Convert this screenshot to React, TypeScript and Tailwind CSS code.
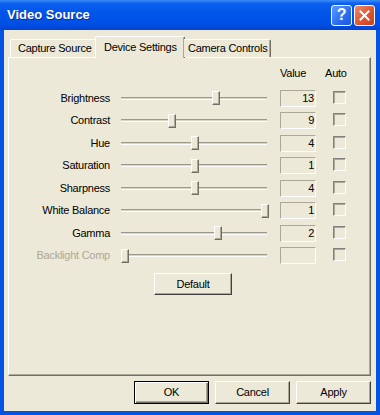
const font = { fontFamily: '"Liberation Sans", Arial, sans-serif' };

type Row = {
  label: string;
  value: string;
  thumb: number;
  h: string;
  disabled?: boolean;
};

const rows: Row[] = [
  { label: "Brightness", value: "13", thumb: 212, h: "h-[22px]" },
  { label: "Contrast", value: "9", thumb: 168, h: "h-[23px]" },
  { label: "Hue", value: "4", thumb: 191, h: "h-[22px]" },
  { label: "Saturation", value: "1", thumb: 191, h: "h-[23px]" },
  { label: "Sharpness", value: "4", thumb: 191, h: "h-[22px]" },
  { label: "White Balance", value: "1", thumb: 261, h: "h-[23px]" },
  { label: "Gamma", value: "2", thumb: 214, h: "h-[22px]" },
  { label: "Backlight Comp", value: "", thumb: 121, h: "h-[23px]", disabled: true },
];

function Slider({ thumb }: { thumb: number }) {
  return (
    <div className="relative ml-[8px] w-[152px] h-[16px] flex items-center px-[3px]">
      <div className="w-full h-[3px] border-t border-t-[#9d9a8c] border-b border-b-white bg-[#d8d4c4]" />
      <div
        className="absolute top-[1px] w-[8px] h-[14px] bg-[#ECE9D8] border-t border-l border-t-white border-l-white border-r border-b border-r-[#716f64] border-b-[#716f64] shadow-[inset_-1px_-1px_0_#aca899]"
        style={{ left: thumb - 118 }}
      />
    </div>
  );
}

function Button({ children, primary, className = "" }: { children: string; primary?: boolean; className?: string }) {
  return (
    <div
      className={`flex items-center justify-center bg-[#ECE9D8] text-[11px] text-black ${
        primary
          ? "border border-black shadow-[inset_1px_1px_0_white,inset_-1px_-1px_0_#716f64,inset_-2px_-2px_0_#aca899]"
          : "border-t border-l border-t-white border-l-white border-r border-b border-r-[#404040] border-b-[#404040] shadow-[inset_-1px_-1px_0_#aca899]"
      } ${className}`}
    >
      {children}
    </div>
  );
}

export default function App() {
  return (
    <div className="w-[380px] h-[415px] flex flex-col bg-[#0553E2] tracking-[-0.25px]" style={font}>
      {/* title bar */}
      <div className="h-[30px] flex items-center pl-[7px] pr-[5px] bg-[linear-gradient(to_bottom,#3d8cf5_0%,#0a5ff0_12%,#0055e8_45%,#0150e6_80%,#0142d0_100%)]">
        <span className="text-white font-bold text-[13px] tracking-normal [text-shadow:1px_1px_0_#0b2d9a] flex-1">
          Video Source
        </span>
        <div className="w-[21px] h-[21px] rounded-[3px] border border-white bg-[linear-gradient(135deg,#5d9bff,#2a6cf0_60%,#1d58e0)] flex items-center justify-center text-white font-bold text-[16px] leading-none">
          ?
        </div>
        <div className="ml-[2px] w-[21px] h-[21px] rounded-[3px] border border-white bg-[linear-gradient(135deg,#f08a6b,#e0552f_55%,#c9401c)] flex items-center justify-center">
          <svg width="11" height="11" viewBox="0 0 11 11">
            <path d="M1.5 1.5 L9.5 9.5 M9.5 1.5 L1.5 9.5" stroke="white" strokeWidth="2" strokeLinecap="square" />
          </svg>
        </div>
      </div>

      {/* body */}
      <div className="flex-1 mx-[4px] mb-[4px] bg-[#ECE9D8] flex flex-col pt-[6px]">
        {/* tabs */}
        <div className="flex items-end h-[21px] pl-[6px] relative z-10 whitespace-nowrap">
          <div className="h-[18px] w-[87px] pl-[7px] flex items-center text-[11px] text-black bg-[#ECE9D8] border-t border-l border-t-white border-l-white rounded-tl-[2px]">
            Capture Source
          </div>
          <div className="h-[22px] mb-[-1px] w-[90px] -ml-[2px] pl-[8px] flex items-center text-[11px] text-black bg-[#ECE9D8] border-t border-l border-r border-t-white border-l-white border-r-[#716f64] shadow-[inset_-1px_0_0_#aca899] rounded-t-[2px]">
            Device Settings
          </div>
          <div className="h-[18px] w-[87px] -ml-[1px] pl-[4px] flex items-center text-[11px] text-black bg-[#ECE9D8] border-t border-r border-t-white border-r-[#716f64] shadow-[inset_-1px_0_0_#aca899] rounded-tr-[2px]">
            Camera Controls
          </div>
        </div>

        {/* panel */}
        <div className="ml-[4px] mr-[5px] h-[319px] border-t border-l border-t-white border-l-white border-r border-b border-r-[#716f64] border-b-[#716f64] shadow-[inset_-1px_-1px_0_#aca899] flex flex-col">
          <div className="h-[29px] flex pt-[8px] text-[11px] text-black leading-[14px]">
            <span className="ml-[271px]">Value</span>
            <span className="ml-[19px]">Auto</span>
          </div>
          {rows.map((r) => (
            <div key={r.label} className={`${r.h} flex items-center`}>
              <div
                className={`w-[101px] text-right text-[11px] whitespace-nowrap ${r.disabled ? "text-[#aca899]" : "text-black"}`}
              >
                {r.label}
              </div>
              <Slider thumb={r.thumb} />
              <div className="ml-[10px] w-[36px] h-[17px] border-t border-l border-t-[#aca899] border-l-[#aca899] border-r border-b border-r-white border-b-white text-[11px] text-black text-right pr-[1px] leading-[15px]">
                {r.value}
              </div>
              <div className="ml-[17px] w-[13px] h-[13px] mb-[2px] border-t border-l border-t-[#808080] border-l-[#808080] border-r border-b border-r-white border-b-white shadow-[inset_1px_1px_0_#aca899]" />
            </div>
          ))}
          <Button className="mt-[6px] ml-[145px] w-[78px] h-[22px]">Default</Button>
        </div>

        {/* bottom buttons */}
        <div className="flex justify-end gap-[6px] mr-[5px] mt-[5px]">
          <Button primary className="w-[75px] h-[23px]">OK</Button>
          <Button className="w-[75px] h-[23px]">Cancel</Button>
          <Button className="w-[75px] h-[23px]">Apply</Button>
        </div>
      </div>
    </div>
  );
}
